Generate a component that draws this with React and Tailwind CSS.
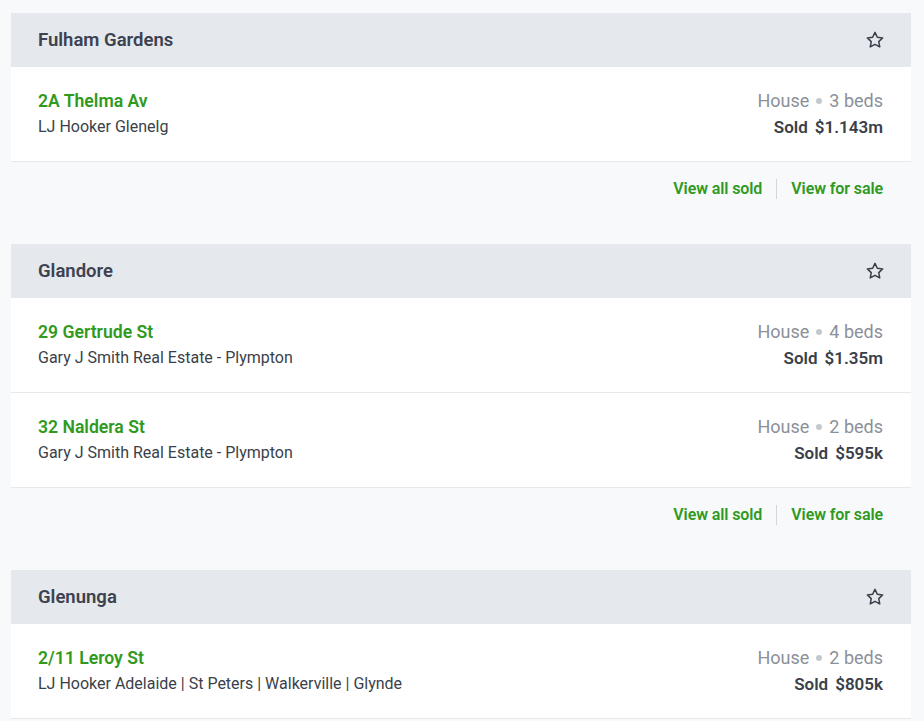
import React from "react";

const Star = () => (
  <svg width="20" height="20" viewBox="0 0 24 24" fill="none" stroke="#3a3f4b" strokeWidth="1.8" strokeLinejoin="round">
    <path d="M12 2.8l2.8 5.9 6.4.8-4.7 4.4 1.2 6.4L12 17.2l-5.7 3.1 1.2-6.4-4.7-4.4 6.4-.8z" />
  </svg>
);

const sections = [
  {
    name: "Fulham Gardens",
    rows: [{ addr: "2A Thelma Av", agent: "LJ Hooker Glenelg", beds: "3 beds", price: "$1.143m" }],
    footer: true,
  },
  {
    name: "Glandore",
    rows: [
      { addr: "29 Gertrude St", agent: "Gary J Smith Real Estate - Plympton", beds: "4 beds", price: "$1.35m" },
      { addr: "32 Naldera St", agent: "Gary J Smith Real Estate - Plympton", beds: "2 beds", price: "$595k" },
    ],
    footer: true,
  },
  {
    name: "Glenunga",
    rows: [{ addr: "2/11 Leroy St", agent: "LJ Hooker Adelaide | St Peters | Walkerville | Glynde", beds: "2 beds", price: "$805k" }],
    footer: false,
  },
];

export default function App() {
  return (
    <div className="min-h-[721px] w-[924px] bg-[#f7f9fb] pt-[13px] pl-[11px] overflow-hidden" style={{ fontFamily: "Roboto, 'Noto Sans', sans-serif" }}>
      <div className="w-[900px] flex flex-col gap-[28px]">
        {sections.map((s) => (
          <div key={s.name} className="flex flex-col">
            <div className="h-[54px] bg-[#e5e8ec] flex items-center justify-between pl-[27px] pr-[26px]">
              <span className="text-[18.5px] font-semibold text-[#3c4250] mt-[2px]">{s.name}</span>
              <Star />
            </div>
            {s.rows.map((r) => (
              <div key={r.addr} className="h-[95px] bg-white border-b border-[#e6e9ec] flex items-center justify-between pl-[27px] pr-[28px]">
                <div className="flex flex-col gap-[4px]">
                  <span className="text-[17.6px] font-semibold text-[#2f9a1e] leading-[22px]">{r.addr}</span>
                  <span className="text-[16px] text-[#3a3f4a] leading-[22px]">{r.agent}</span>
                </div>
                <div className="flex flex-col items-end gap-[4px]">
                  <span className="text-[18px] text-[#8b9099] leading-[22px] flex items-center">
                    House<span className="mx-[7px] inline-block w-[6px] h-[6px] rounded-full bg-[#c4c8cd]"></span>{r.beds}
                  </span>
                  <span className="text-[17px] font-semibold text-[#3a3f4a] leading-[22px]">
                    Sold<span className="ml-[7px]">{r.price}</span>
                  </span>
                </div>
              </div>
            ))}
            {s.footer && (
              <div className="h-[54px] flex items-center justify-end pr-[28px]">
                <span className="text-[16px] font-semibold text-[#2f9a1e] tracking-[-0.1px]">View all sold</span>
                <span className="mx-[14px] w-px h-[20px] bg-[#d3d7db]"></span>
                <span className="text-[16px] font-semibold text-[#2f9a1e] tracking-[-0.1px]">View for sale</span>
              </div>
            )}
          </div>
        ))}
      </div>
    </div>
  );
}
